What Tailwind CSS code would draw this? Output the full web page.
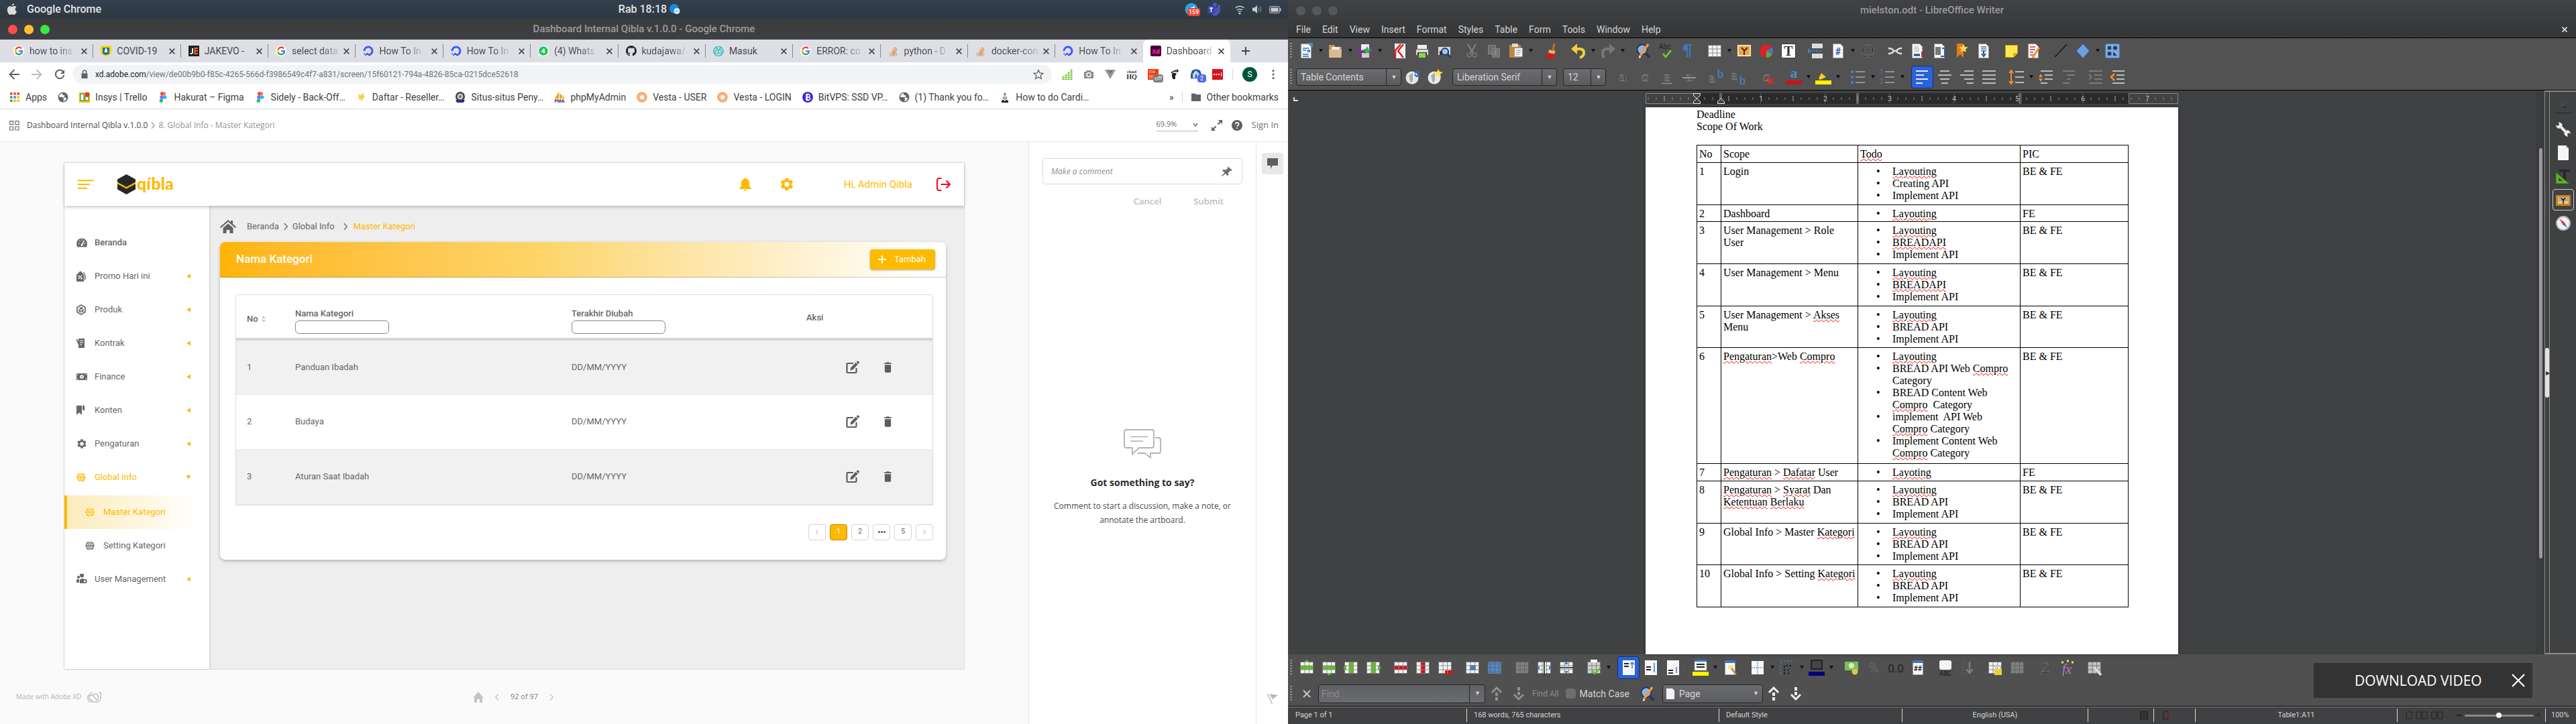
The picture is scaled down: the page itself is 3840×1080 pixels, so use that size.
<!DOCTYPE html>
<html lang="id">
<head>
<meta charset="utf-8">
<title>Dashboard Internal Qibla v.1.0.0</title>
<script src="https://cdn.jsdelivr.net/npm/@tailwindcss/browser@4"></script>
</head>
<body class="bg-[#404143]">
<svg class="hidden" aria-hidden="true">
  <symbol id="google" viewBox="0 0 16 16"><circle cx="8" cy="8" r="8" fill="#fff"/><g fill="none" stroke-width="2.4"><path d="M12 4.3A5 5 0 0 0 3.6 5.7" stroke="#ea4335"/><path d="M3.6 5.7a5 5 0 0 0 0 4.6" stroke="#fbbc05"/><path d="M3.6 10.3a5 5 0 0 0 8 1.6" stroke="#34a853"/><path d="M11.6 11.9A5 5 0 0 0 13 8.2H8.2" stroke="#4285f4"/></g></symbol>
  <symbol id="covid" viewBox="0 0 16 16"><path fill="#f5d90a" d="M0 0h16v11c0 3-4 3-8 5-4-2-8-2-8-5z"/><path fill="#1b6cb5" d="M3 3h10v8c0 2-3 2-5 3-2-1-5-1-5-3z"/><path fill="#fff" d="M7 4h2l2 8H5z"/><path fill="#2e7d32" d="M5 10h6v2H5z"/></symbol>
  <symbol id="jakevo" viewBox="0 0 16 16"><path fill="#222" d="M0 0h16v16H0z"/><path d="M6 4v6.500q0 1.500-3.500 1.500" stroke="#fff" stroke-width="2" fill="none"/><path d="M14 4H9.500v8H14M9.500 8H14" stroke="#f06423" stroke-width="2" fill="none"/></symbol>
  <symbol id="ocean" viewBox="0 0 16 16"><path d="M8 14a6 6 0 1 0-6-6" fill="none" stroke="#3d5afe" stroke-width="3"/><path fill="#3d5afe" d="M5 11h3v3H5zM3 13h2v2H3zM1.500 11H3v2H1.500z"/></symbol>
  <symbol id="whatsapp" viewBox="0 0 16 16"><path fill="#fff" d="M0 16l1.200-4A8 8 0 1 1 4 15z"/><circle cx="8" cy="8" r="6.800" fill="#1fc85a"/><path d="M9 4.500L6 9h4.500M9 5v6.500" stroke="#fff" stroke-width="1.400" fill="none"/></symbol>
  <symbol id="github" viewBox="0 0 16 16"><path fill="#24292e" d="M8 0C3.580 0 0 3.580 0 8c0 3.540 2.290 6.530 5.470 7.590.4.070.55-.17.55-.38v-1.490c-2.010.37-2.530-.49-2.690-.94-.36-.91-.9-1.200-.9-1.200-.7-.5.1-.5.100-.5.800.100 1.230.82 1.230.82.72 1.210 1.870.87 2.330.66.070-.52.280-.87.510-1.070-1.780-.2-3.640-.89-3.640-3.950 0-.87.310-1.590.82-2.150-.1-.2-.36-1 .1-2.100 0 0 .67-.2 2.200.8a7.600 7.600 0 0 1 4 0c1.530-1 2.200-.8 2.200-.8.4 1.100.2 1.900.1 2.100.5.560.82 1.270.82 2.150 0 3.070-1.870 3.750-3.650 3.950.290.25.54.730.54 1.480v2.200c0 .2.150.46.55.38A8 8 0 0 0 8 0z"/></symbol>
  <symbol id="masuk" viewBox="0 0 16 16"><circle cx="8" cy="8.500" r="7" fill="none" stroke="#35c0c5" stroke-width="1.600"/><path d="M3 2l5 5 5-5M8 7v4a3 3 0 0 1-5-2l3-3M8 11a3 3 0 0 0 5-2l-3-3" fill="none" stroke="#35c0c5" stroke-width="1.500"/></symbol>
  <symbol id="stack" viewBox="0 0 16 16"><path d="M2.500 10v5h10v-5" fill="none" stroke="#bcbbbb" stroke-width="1.400"/><path d="M4.500 13h6M4.700 10.600l6 .7M5.500 7.800l5.500 2M7.200 5l4.700 3.500M9.800 2.500l3.400 4.700" stroke="#f48024" stroke-width="1.400"/></symbol>
  <symbol id="xd" viewBox="0 0 16 16"><rect width="16" height="16" rx="2" fill="#470137"/><text x="8" y="11.500" font-family="Open Sans" font-size="9" font-weight="700" fill="#ff2bc2" text-anchor="middle">Xd</text></symbol>
  <symbol id="x" viewBox="0 0 10 10"><path d="M1.500 1.500l7 7M8.500 1.500l-7 7" stroke="currentColor" stroke-width="1.500"/></symbol>
  <symbol id="world" viewBox="0 0 16 16"><circle cx="8" cy="8" r="7.500" fill="#5f6368"/><path fill="#fff" d="M8 2c-2 1-1 3 1 3s2 2 0 3-3-1-4 0-3-1-3-1 1-5 6-5zM9 9c2-1 4 0 4 1s-2 4-4 4 1-2 0-3-1-2 0-2z"/></symbol>
  <symbol id="figma" viewBox="0 0 16 16"><path fill="#f24e1e" d="M8 0H6a2.700 2.700 0 0 0 0 5.300h2z"/><path fill="#ff7262" d="M8 0h2a2.700 2.700 0 0 1 0 5.300H8z"/><path fill="#a259ff" d="M8 5.300H6a2.700 2.700 0 0 0 0 5.400h2z"/><circle cx="10.700" cy="8" r="2.700" fill="#1abcfe"/><path fill="#0acf83" d="M8 10.700H6A2.700 2.700 0 1 0 8 13.300z"/></symbol>
  <symbol id="trello" viewBox="0 0 16 16"><path fill="#f4c20d" d="M0 1h16v15H0z"/><rect x="2" y="3" width="5" height="10" fill="#fff" stroke="#188038"/><rect x="9" y="7" width="5" height="6" fill="#fff" stroke="#188038"/><circle cx="12" cy="4" r="3.500" fill="#e53935"/></symbol>
  <symbol id="daftar" viewBox="0 0 16 16"><path fill="#f6cf4a" d="M3 3l4 2 4-4v5l3 2-4 1-1 6-3-5-3 2 1-4z"/></symbol>
  <symbol id="situs" viewBox="0 0 16 16"><circle cx="8" cy="7" r="7" fill="#2a3a8f"/><circle cx="8" cy="7" r="4.500" fill="#f2d54b"/><circle cx="8" cy="7" r="2" fill="#2a7bbf"/><path fill="#2d2a9a" d="M1 12h14l-2 4H3z"/></symbol>
  <symbol id="pma" viewBox="0 0 16 16"><path fill="#f89c0e" d="M7 0v10H1zM8 2c3 2 4 5 4 8H8zM12 4c2 2 3 4 3 6h-2z"/><text x="8" y="16" font-family="Open Sans" font-size="6.500" font-weight="800" fill="#4c4f8a" text-anchor="middle">PMA</text></symbol>
  <symbol id="vesta" viewBox="0 0 16 16"><circle cx="8" cy="8" r="6.500" fill="#fde3c8" stroke="#f5a55a" stroke-width="2.500"/><circle cx="8" cy="8" r="3.800" fill="#fff" stroke="#f3a965" stroke-width="1.500"/></symbol>
  <symbol id="bit" viewBox="0 0 16 16"><circle cx="8" cy="8" r="8" fill="#4527c8"/><path d="M6 4h3a2 2 0 0 1 0 4H6zM6 8h3.500a2 2 0 0 1 0 4H6zM7 2.500V13.500M9 2.500V4M9 12v1.500" fill="none" stroke="#fff" stroke-width="1.400"/></symbol>
  <symbol id="cardi" viewBox="0 0 16 16"><path fill="#222" d="M3 16v-3l3-1 2 2 2-2 3 1v3z"/><path d="M8 1v6M6 3h4M5 8h6l-1 3H6z" stroke="#777" fill="#ccc"/><circle cx="8" cy="4" r="1.200" fill="#c33"/></symbol>
  <symbol id="globe" viewBox="0 0 16 16"><circle cx="8" cy="8" r="7.500" fill="currentColor"/><path d="M.5 5.500h15M.5 10.500h15M8 .5v15" stroke="#fff"/><ellipse cx="8" cy="8" rx="3.600" ry="7.500" fill="none" stroke="#fff"/></symbol>
  <symbol id="gear" viewBox="0 0 24 24"><path fill="currentColor" fill-rule="evenodd" d="M19.400 13a7.500 7.500 0 0 0 0-2l2.200-1.700c.2-.2.300-.4.100-.7l-2-3.500c-.1-.2-.4-.3-.6-.2l-2.600 1a7.600 7.600 0 0 0-1.700-1L14.400 2.200c0-.2-.2-.4-.5-.4h-4c-.3 0-.5.2-.5.400L9 4.900c-.6.300-1.200.6-1.700 1l-2.600-1c-.2-.1-.5 0-.6.2l-2 3.500c-.1.300-.1.500.1.700L4.400 11a7.500 7.500 0 0 0 0 2l-2.200 1.700c-.2.200-.3.400-.1.700l2 3.500c.1.200.4.300.6.200l2.600-1c.5.400 1.100.7 1.700 1l.4 2.700c0 .2.200.4.500.4h4c.3 0 .5-.2.500-.4l.4-2.700c.6-.3 1.200-.6 1.700-1l2.600 1c.2.100.5 0 .6-.2l2-3.500c.2-.3.100-.5-.1-.7zM12 16a4 4 0 1 1 0-8 4 4 0 0 1 0 8z"/></symbol>
  <symbol id="edit" viewBox="0 0 20 20"><path d="M11 4H2.500a1 1 0 0 0-1 1v12a1 1 0 0 0 1 1h12a1 1 0 0 0 1-1v-6" fill="none" stroke="currentColor" stroke-width="2.200"/><path fill="currentColor" d="M6.500 14.500l.7-4 7.600-7.700 3 3-7.600 7.700zM15.600 2l1.300-1.300q.8-.7 1.600 0l1.300 1.300q.7.800 0 1.600L18.500 5z"/></symbol>
  <symbol id="trash" viewBox="0 0 14 18"><path fill="currentColor" d="M1 1.500h3.500l.8-1.300h3.400l.8 1.300H13V3.500H1zM1.800 4.800h10.400V16q0 1.600-1.500 1.600H3.300Q1.800 17.600 1.800 16z"/></symbol>
  <symbol id="left" viewBox="0 0 10 16"><path d="M8 1.500L2 8l6 6.500" fill="none" stroke="currentColor" stroke-width="1.800"/></symbol>
  <symbol id="right" viewBox="0 0 10 16"><path d="M2 1.500L8 8l-6 6.500" fill="none" stroke="currentColor" stroke-width="1.800"/></symbol>
</svg>

<div class="flex h-screen w-full overflow-hidden">

<!-- Browser window -->
<section class="flex w-1/2 flex-col bg-white font-[Roboto,sans-serif]">
  <div class="grid h-7 shrink-0 grid-cols-3 items-center bg-linear-to-b from-[#33404e] to-[#2e3841] px-[10px] text-base font-medium text-[#e4e6e8]">
    <div class="flex items-center gap-3.5">
      <svg class="h-[18px] w-4" viewBox="0 0 16 18" fill="#dcdcdc"><path d="M11 0c.1 2-1.500 3.800-3.200 3.700C7.600 2 9.300.2 11 0zM8 5c.7 0 1.900-1 3.400-.9 1.200 0 2.300.6 3 1.600-2.600 1.600-2.200 5.200.6 6.300-.8 2.200-2.300 5-3.900 5-1.200 0-1.600-.8-3-.8s-1.900.8-3 .8C3 17 .5 12.500.8 9 1 6 3 4.200 5 4.200 6.300 4.200 7.300 5 8 5z"/></svg>
      <span>Google Chrome</span>
    </div>
    <div class="flex items-center justify-center gap-1 pl-4">
      <span>Rab 18:18</span>
      <svg class="size-4" viewBox="0 0 16 16"><circle cx="7" cy="7" r="7" fill="#1e88e5"/><circle cx="11" cy="10.500" r="4.500" fill="#d6ebff"/><path d="M8.500 10.500h5" stroke="#3b6ea5" stroke-dasharray="1 1"/></svg>
    </div>
    <div class="flex items-center justify-end gap-2.5">
      <div class="relative mr-1 h-5 w-5">
        <svg class="size-5" viewBox="0 0 20 20"><circle cx="10" cy="10" r="9.500" fill="#2ca5e0"/><path fill="#fff" d="M4 10l11-5-2 10-4-3z"/></svg>
        <span class="absolute top-2 left-1 rounded-sm bg-[#f0413c] px-0.5 text-[9px] leading-3 text-white">159</span>
      </div>
      <svg class="mr-2.5 size-5" viewBox="0 0 20 20"><circle cx="11" cy="3" r="3" fill="#5059c9"/><circle cx="17" cy="5" r="2" fill="#5059c9"/><path fill="#4b53bc" d="M6 7h13v6a5 5 0 0 1-3 4 6 6 0 0 1-10 0z"/><path fill="#3b43a5" d="M0 5h11v11H0z"/><path d="M3 8h5M5.500 8v6" stroke="#fff" stroke-width="1.600"/></svg>
      <svg class="h-4 w-4" viewBox="0 0 16 16" fill="none" stroke="#c8ccd0" stroke-width="1.400"><path d="M1.500 6a9 9 0 0 1 13 0M4 9a6 6 0 0 1 8 0M6 11.500a3 3 0 0 1 4 0"/><circle cx="8" cy="14" r=".8"/></svg>
      <svg class="h-4 w-4" viewBox="0 0 16 16"><path fill="#c8ccd0" d="M1 5.500h3L8 2v12l-4-3.500H1z"/><path d="M10 5.500q2 2.500 0 5M12 3.500q3.500 4.500 0 9" stroke="#8d949b" fill="none"/></svg>
      <svg class="h-4 w-[18px]" viewBox="0 0 18 16"><rect x=".7" y="3.700" width="14.600" height="9.600" rx="1" fill="none" stroke="#c8ccd0"/><path fill="#c8ccd0" d="M2.500 5.500h11v6h-11zM16 6.500h1.500v4H16z"/></svg>
    </div>
  </div>

  <div class="relative flex h-[31px] shrink-0 items-center justify-center bg-linear-to-b from-[#3b3c3e] to-[#3e4043] text-[15px] font-medium text-[#9b9b9c]">
    <div class="absolute left-3 flex gap-2.5">
      <button aria-label="Tutup" class="size-3.5 rounded-full bg-[#fa4d51]"></button>
      <button aria-label="Kecilkan" class="size-3.5 rounded-full bg-[#fdbf35]"></button>
      <button aria-label="Besarkan" class="size-3.5 rounded-full bg-[#37e845]"></button>
    </div>
    Dashboard Internal Qibla v.1.0.0 - Google Chrome
  </div>

  <div id="tabs" class="relative flex h-[34px] shrink-0 bg-[#dddfe5] pr-[86px] pl-[9px] text-sm text-[#45484d]"></div>

  <div class="flex h-9 shrink-0 items-center text-[#5f6368]">
    <div class="flex w-[108px] shrink-0 items-center gap-4 pl-3">
      <button aria-label="Kembali"><svg class="size-[18px]" viewBox="0 0 18 18" fill="none" stroke="currentColor" stroke-width="1.900"><path d="M17 9H3M9.500 2L2.500 9l7 7"/></svg></button>
      <button aria-label="Maju" class="text-[#babcbe]"><svg class="size-[18px]" viewBox="0 0 18 18" fill="none" stroke="currentColor" stroke-width="1.900"><path d="M1 9h14M8.500 2l7 7-7 7"/></svg></button>
      <button aria-label="Muat ulang"><svg class="size-[18px]" viewBox="0 0 18 18"><path d="M14.500 5.500A6.300 6.300 0 1 0 15.300 10" fill="none" stroke="currentColor" stroke-width="2"/><path fill="currentColor" d="M16 2v6h-6z"/></svg></button>
    </div>
    <div class="flex h-7 flex-1 items-center rounded-full bg-[#f1f3f4] px-3">
      <svg class="h-3.5 w-3" viewBox="0 0 12 14"><path fill="#5f6368" d="M1.500 5.500h9V13h-9z"/><path d="M3.500 6V3.500a2.500 2.500 0 0 1 5 0V6" fill="none" stroke="#5f6368" stroke-width="1.500"/></svg>
      <p class="ml-2.5 flex-1 text-xs text-[#70757a]"><a href="#" class="text-[#202124]">xd.adobe.com</a>/view/de00b9b0-f85c-4265-566d-f3986549c4f7-a831/screen/15f60121-794a-4826-85ca-0215dce52618</p>
      <svg class="size-4" viewBox="0 0 16 16"><path d="M8 1.500l2 4.500 4.900.4-3.700 3.200 1.100 4.800L8 11.900l-4.300 2.500 1.100-4.800L1.100 6.400 6 6z" fill="none" stroke="#5f6368" stroke-width="1.300"/></svg>
    </div>
    <div class="flex shrink-0 items-center gap-4 pr-[14px] pl-[15px]">
      <svg class="size-4" viewBox="0 0 16 16"><path d="M2 16v-5M6 16V8M10 16V5M14 16V0" stroke="#6cc02c" stroke-width="3" stroke-dasharray="2 1"/></svg>
      <svg class="size-4" viewBox="0 0 16 16"><path fill="#8c8c8c" d="M1 4h3l1-2h6l1 2h3v10H1z"/><circle cx="8" cy="8.500" r="3" fill="none" stroke="#fff" stroke-width="1.500"/></svg>
      <svg class="size-4" viewBox="0 0 16 16"><path fill="#9a9a9a" d="M0 1h4l4 8 4-8h4L8 15z"/><path fill="#6f6f6f" d="M4 1h3l1 2 1-2h3L8 9z"/></svg>
      <svg class="size-4" viewBox="0 0 16 16" fill="#333" font-family="Liberation Serif" font-weight="700" text-anchor="middle"><text x="8" y="6" font-size="6">cloud</text><text x="8" y="15" font-size="10">HQ</text></svg>
      <div class="relative size-4 bg-[#ee4010]">
        <span class="absolute top-0 left-0.5 text-[8px] leading-2 text-[#ffd9c9]">co<br>RE</span>
        <span class="absolute top-2 left-2 rounded-sm bg-[#777] px-0.5 text-[9px] leading-3 text-white">off</span>
      </div>
      <svg class="size-4" viewBox="0 0 16 16" fill="#222"><path d="M5 6c4-1 7 0 5 3-1 1-2 1-1 3s-1 4-3 3-3-8-1-9z"/><circle cx="4" cy="5" r="1.200"/><circle cx="6.500" cy="3.500" r="1.300"/><circle cx="9" cy="2.800" r="1.400"/><ellipse cx="12" cy="2.800" rx="1.600" ry="2.200"/></svg>
      <div class="relative size-4">
        <svg class="size-4" viewBox="0 0 16 16"><path fill="#2b5797" d="M0 8l2-6 6-2 6 2 2 6v6H0z"/><path fill="#bcd7f2" d="M8 2l5 5v6H9V8H7v5H3V7z"/></svg>
        <span class="absolute top-2 left-2.5 rounded-sm bg-[#4a68ee] px-1 text-[9px] leading-3 text-white">2</span>
      </div>
      <svg class="size-4" viewBox="0 0 16 16"><path fill="#d9141e" d="M0 0h16v16H0z"/><path fill="#fff" d="M2 7h2v2H2zM5.500 7h2v2h-2zM9 7h2v2H9zM13 5h1v6h-1z"/></svg>
      <span class="-mx-0.5 h-4 w-px bg-[#d3d5d8]"></span>
      <button class="size-[22px] rounded-full bg-[#00543c] text-center text-xs text-white">S</button>
      <button aria-label="Menu"><svg class="h-4 w-4" viewBox="0 0 16 16" fill="#5f6368"><circle cx="8" cy="2.500" r="1.600"/><circle cx="8" cy="8" r="1.600"/><circle cx="8" cy="13.500" r="1.600"/></svg></button>
    </div>
  </div>

  <nav class="flex h-[34px] shrink-0 items-center justify-between border-b border-[#d6d8e0] pr-[14px] pb-0.5 pl-[14px] text-sm text-[#3e4145]">
    <div id="bookmarks" class="flex items-center gap-4"></div>
    <div class="flex items-center gap-3">
      <button>»</button>
      <span class="h-4 w-px bg-[#d0d2d5]"></span>
      <a href="#" class="flex items-center gap-2"><svg class="size-4" viewBox="0 0 16 16"><path fill="#5f6368" d="M1 2.500h5.500L8 4h7v10H1z"/></svg>Other bookmarks</a>
    </div>
  </nav>

  <header class="flex h-[49px] shrink-0 items-center justify-between border-b border-[#e6e6e6] px-[14px] font-['Open_Sans',sans-serif] text-xs text-[#4b4b4b]">
    <div class="flex items-center">
      <svg class="mr-[11px] size-[15px]" viewBox="0 0 15 15" fill="none" stroke="#6e6e6e" stroke-width="1.200"><path d="M.7.7h5v5h-5zM9 .7h5v5H9zM.7 9h5v5h-5zM9 9h5v5H9z"/></svg>
      <a href="#">Dashboard Internal Qibla v.1.0.0</a>
      <svg class="mx-1 h-3 w-2 text-[#999]"><use href="#right"/></svg>
      <span class="text-[#959595]">8. Global Info - Master Kategori</span>
    </div>
    <div class="flex items-center text-[#6e6e6e]">
      <label class="relative mr-5 flex items-center border-b border-[#b5b5b5] pb-0.5">
        <select aria-label="Zoom" class="w-[62px] appearance-none text-[11px] outline-none"><option>69.9%</option></select>
        <svg class="absolute right-0 size-2" viewBox="0 0 8 8"><path d="M1 2l3 4 3-4" fill="none" stroke="#6e6e6e" stroke-width="1.500"/></svg>
      </label>
      <button aria-label="Layar penuh" class="mr-[14px]"><svg class="size-4" viewBox="0 0 16 16"><path d="M9.500 6.500L13 3M3 13l3.500-3.500" stroke="#5e5e5e" stroke-width="2"/><path fill="#5e5e5e" d="M16 0v6l-6-6zM0 16v-6l6 6z"/></svg></button>
      <button aria-label="Bantuan" class="mr-[14px]"><svg class="size-4" viewBox="0 0 16 16"><circle cx="8" cy="8" r="8" fill="#5e5e5e"/><path d="M5.700 6.300q0-2.500 2.500-2.500t2.400 2.200q0 1.400-1.500 2.200-1 .5-1 1.600M8.100 11.300v1.700" fill="none" stroke="#fff" stroke-width="1.600"/></svg></button>
      <a href="#" class="text-[13px]">Sign In</a>
    </div>
  </header>

  <div class="flex min-h-0 flex-1">
    <main class="flex min-w-0 flex-1 flex-col bg-[#fafafa]">
      <!-- Artboard -->
      <div class="mt-[30px] mr-[95px] ml-[95px] flex min-h-0 flex-1 flex-col border border-[#dedede] bg-[#eeeeee] text-[13px] text-[#666767]">
        <header class="relative z-10 flex h-[64px] shrink-0 items-center justify-between bg-white pr-5 pl-5 shadow-[0_2px_5px_rgba(0,0,0,0.22)]">
          <div class="flex items-center">
            <button aria-label="Menu samping"><svg class="h-3.5 w-6" viewBox="0 0 24 14"><path d="M0 1.300h24M0 7h17.500M0 12.700h14" stroke="#ffb900" stroke-width="2"/></svg></button>
            <svg class="ml-[35px] h-[30px] w-[27px]" viewBox="0 0 27 30"><path fill="#272727" d="M13.500 0L27 7.500v15L13.500 30 0 22.500v-15z"/><path fill="#ffb900" d="M0 11.500l13.500 7.500L27 11.500v2.700L13.500 21.700 0 14.200z"/></svg>
            <span class="mb-1 ml-0.5 font-[Lato,sans-serif] text-[25px] leading-7 font-black text-[#ffb900]">qíbla</span>
          </div>
          <div class="flex items-center text-[#ffb900]">
            <button aria-label="Notifikasi" class="mr-[42px]"><svg class="h-5 w-[18px]" viewBox="0 0 18 20" fill="currentColor"><path d="M9 0q1.200 0 1.300 1.500C13.500 2.200 15 5 15 8v4.500l2.500 3.200V17H.5v-1.300L3 12.500V8c0-3 1.500-5.800 4.700-6.500C7.800 0 9 0 9 0zM7 18.300h4Q10.500 20 9 20t-2-1.700z"/></svg></button>
            <button aria-label="Pengaturan" class="mr-[74px]"><svg class="size-[22px]"><use href="#gear"/></svg></button>
            <span class="mr-9 text-[15px]">Hi, Admin Qibla</span>
            <button aria-label="Keluar" class="text-[#f5061c]"><svg class="h-5 w-[21px]" viewBox="0 0 21 20" fill="none" stroke="currentColor" stroke-width="2"><path d="M7.500 1H4Q1 1 1 4v12q0 3 3 3h3.500M6.500 10H20M14.500 4.500L20 10l-5.500 5.500"/></svg></button>
          </div>
        </header>
        <div class="flex min-h-0 flex-1">
          <nav class="w-[216px] shrink-0 bg-white pt-[30px] shadow-[1px_0_3px_rgba(0,0,0,0.15)]">
            <ul id="menu"></ul>
          </nav>
          <div class="min-w-0 flex-1 pr-[27px] pl-4">
            <div class="flex h-[54px] items-center pt-2">
              <svg class="h-5 w-6" viewBox="0 0 24 20" fill="#626262"><path d="M12 5.500l7.500 6.500v8h-5v-5h-5v5h-5v-8z"/><path d="M12 0l4 3.500V1h3v5l5 4.500-1.200 1.700L12 2.700 1.200 12.200 0 10.500z"/></svg>
              <a href="#" class="ml-4">Beranda</a>
              <svg class="mx-1.5 h-3 w-2"><use href="#right"/></svg>
              <a href="#">Global Info</a>
              <svg class="mr-2 ml-3 h-3 w-2"><use href="#right"/></svg>
              <span class="text-[#ffb900]">Master Kategori</span>
            </div>
            <section class="rounded-lg bg-white pb-[29px] shadow-[0_2px_5px_rgba(0,0,0,0.25)]">
              <div class="flex h-[53px] items-center justify-between rounded-t-lg border-b border-black/20 bg-linear-to-r from-[#ffb400] via-[#fdd56a] via-45% to-white to-98% pr-4 pl-6">
                <h1 class="text-[17px] font-medium text-white">Nama Kategori</h1>
                <button class="flex h-[30px] items-center gap-3 rounded-sm bg-[#fdbb00] pr-3.5 pl-3 text-[13px] text-white shadow-[0_1px_3px_rgba(0,0,0,0.35)]"><svg class="size-3" viewBox="0 0 12 12"><path d="M6 0v12M0 6h12" stroke="#fff" stroke-width="2"/></svg>Tambah</button>
              </div>
              <div class="mt-[25px] mr-[19px] ml-[23px] rounded-t border border-[#dcdcdc]">
                <table class="w-full table-fixed text-left">
                  <thead class="border-b-4 border-[#d6d6d6]">
                    <tr class="h-[66px]">
                      <th class="w-[88px] pt-2 pl-4 font-medium">No <svg class="mb-px ml-0.5 inline h-2.5 w-1.5" viewBox="0 0 6 10" fill="#c5c9cf"><path d="M0 4l3-4 3 4zM0 6l3 4 3-4z"/></svg></th>
                      <th class="w-[412px] pt-3 align-middle font-medium"><label class="block leading-5">Nama Kategori<input class="block h-5 w-[140px] rounded-md border border-[#8a8a8a] bg-white px-2"></label></th>
                      <th class="w-[350px] pt-3 font-medium"><label class="block leading-5">Terakhir Diubah<input class="block h-5 w-[140px] rounded-md border border-[#8a8a8a] bg-white px-2"></label></th>
                      <th class="pt-1 font-medium">Aksi</th>
                    </tr>
                  </thead>
                  <tbody id="rows"></tbody>
                </table>
              </div>
              <div class="mt-7 mr-[19px] flex justify-end gap-1.5 text-[11px]">
                <button aria-label="Sebelumnya" class="flex h-6 w-[26px] items-center justify-center rounded-sm border border-[#d5d5d5] text-[#999]"><svg class="h-2 w-1.5"><use href="#left"/></svg></button>
                <button class="h-6 w-[26px] rounded-sm border border-[#b98a00] bg-[#ffb900] text-white">1</button>
                <button class="h-6 w-[26px] rounded-sm border border-[#d5d5d5]">2</button>
                <button aria-label="Lainnya" class="flex h-6 w-[26px] items-center justify-center gap-px rounded-sm border border-[#d5d5d5]"><i class="size-[3px] rounded-full bg-[#555]"></i><i class="size-[3px] rounded-full bg-[#555]"></i><i class="size-[3px] rounded-full bg-[#555]"></i></button>
                <button class="h-6 w-[26px] rounded-sm border border-[#d5d5d5]">5</button>
                <button aria-label="Berikutnya" class="flex h-6 w-[26px] items-center justify-center rounded-sm border border-[#d5d5d5] text-[#999]"><svg class="h-2 w-1.5"><use href="#right"/></svg></button>
              </div>
            </section>
          </div>
        </div>
      </div>
      <footer class="grid h-[81px] shrink-0 grid-cols-3 items-center font-['Open_Sans',sans-serif] text-[#7c7c7c]">
        <div class="flex items-center gap-2 pl-6 text-[10px] text-[#b4b4b4]">Made with Adobe XD
          <svg class="h-4 w-[22px]" viewBox="0 0 22 16" fill="none" stroke="#b4b4b4" stroke-width="1.300"><path d="M7 15.200A6 6 0 0 1 6 3.500 7.300 7.300 0 0 1 21.300 8a7 7 0 0 1-7 7.200z"/><path d="M9.500 12.500H7.500a3.800 3.800 0 1 1 3-6.200l4 5M9 5.500a4.700 4.700 0 1 1 5 7"/></svg>
        </div>
        <div class="flex items-center justify-center text-[#c4c4c4]">
          <svg class="h-4 w-4" viewBox="0 0 16 16" fill="currentColor"><path d="M8 0l8 9h-2v7h-4v-5H6v5H2V9H0z"/></svg>
          <button aria-label="Artboard sebelumnya" class="ml-3.5"><svg class="h-3 w-3"><use href="#left"/></svg></button>
          <span class="mx-3.5 text-[11px] text-[#7c7c7c]">92 of 97</span>
          <button aria-label="Artboard berikutnya"><svg class="h-3 w-3"><use href="#right"/></svg></button>
        </div>
      </footer>
    </main>

    <aside class="flex w-[339px] shrink-0 flex-col border-l border-[#e4e4e4] px-5 pt-6 font-['Open_Sans',sans-serif]">
      <div class="flex h-[39px] items-center rounded-sm border border-[#dadada] pr-3.5 pl-3">
        <input aria-label="Komentar" placeholder="Make a comment" class="min-w-0 flex-1 text-xs italic outline-none placeholder:text-[#8f8f8f]">
        <svg class="h-4 w-4" viewBox="0 0 16 16" fill="#6e6e6e"><path d="M9 0l7 6-1.500 1L13 6.500l-3 3 .3 3.500L9 14.500 5.800 11 1 15l-1-.5 4.500-5L1 6.500 2.500 5l3.800.5 3-2.700z"/></svg>
      </div>
      <div class="mt-4 flex justify-end gap-12 pr-7 text-[13px] font-semibold text-[#bdbdbd]">
        <button>Cancel</button><button>Submit</button>
      </div>
      <div class="flex flex-1 flex-col items-center justify-center pt-9">
        <svg class="h-11 w-14" viewBox="0 0 56 44" fill="none" stroke="#b3b3b3" stroke-width="1.800"><path d="M4 1h38q3 0 3 3v21q0 3-3 3H23l-10 9.500V28H4q-3 0-3-3V4q0-3 3-3z"/><path d="M47 13h5q3 0 3 3v17q0 3-3 3H40v7l-8-7H21"/><path d="M10 11.500h26M10 18h19" stroke-width="1.300"/></svg>
        <h2 class="mt-[26px] text-sm leading-5 font-bold text-[#2c2c2c]">Got something to say?</h2>
        <p class="mt-3.5 text-center text-xs leading-[21px] text-[#4b4b4b]">Comment to start a discussion, make a note, or<br>annotate the artboard.</p>
      </div>
    </aside>
    <aside class="flex w-12 shrink-0 flex-col items-center justify-between border-l border-[#e4e4e4] pt-4 pb-[29px]">
      <button aria-label="Komentar" class="flex h-8 w-8 items-center justify-center rounded-sm bg-[#e8e8e8]"><svg class="h-4 w-4" viewBox="0 0 16 16"><path fill="#5e5e5e" d="M0 0h16v11H8l-3 5v-5H0z"/></svg></button>
      <button aria-label="Laporkan"><svg class="h-4 w-4" viewBox="0 0 16 16"><path d="M.5 0l7 15" stroke="#b8b8b8" stroke-width="1.500"/><path fill="#b8b8b8" d="M3 0l13 2-8 6z"/></svg></button>
    </aside>
  </div>
</section>

<!-- Word processor window -->
<section class="relative flex w-1/2 flex-col bg-[#404143] font-[Roboto,sans-serif] text-sm text-[#d4d4d4]">
  <div class="shrink-0 border-b border-black bg-linear-to-b from-[#404245] to-[#353637]">
    <div class="relative flex h-8 items-center justify-center text-[15px] font-medium text-[#9b9b9c]">
      <div class="absolute left-3 flex gap-2.5">
        <button aria-label="Close" class="size-3.5 rounded-full bg-[#55575a]"></button>
        <button aria-label="Minimize" class="size-3.5 rounded-full bg-[#55575a]"></button>
        <button aria-label="Maximize" class="size-3.5 rounded-full bg-[#55575a]"></button>
      </div>
      mielston.odt - LibreOffice Writer
    </div>
    <nav class="flex h-6 items-center gap-[17px] pl-3">
      <button>File</button><button>Edit</button><button>View</button><button>Insert</button><button>Format</button><button>Styles</button><button>Table</button><button>Form</button><button>Tools</button><button>Window</button><button>Help</button>
      <button aria-label="Close document" class="ml-auto pr-3"><svg class="size-2.5 text-white"><use href="#x"/></svg></button>
    </nav>
  </div>
  <div class="shrink-0 border-b border-black bg-[#525252]">
    <div class="flex h-[39px] items-center pb-0.5 pl-[3px]"><i class="mr-1 h-6 w-[3px] bg-[repeating-linear-gradient(#8a8a8a_0_2px,#525252_2px_4px)]"></i>
      <div class="flex items-center" data-bar="new ^ open ^ save ^ | pdf print preview | cut copy paste ^ | brush | undo ^ redo ^ | find abc pilcrow | table ^ image chart textbox | break field ^ omega | link footnote endnote bookmark xref | note track | line diamond ^ shapes"></div>
    </div>
    <div class="flex h-[38px] items-center pl-[3px]"><i class="mr-1.5 h-6 w-[3px] bg-[repeating-linear-gradient(#8a8a8a_0_2px,#525252_2px_4px)]"></i>
      <div class="relative flex w-[157px]"><select aria-label="Paragraph style" class="h-[26px] w-full appearance-none rounded border border-[#262626] bg-linear-to-b from-[#6a6c6f] to-[#5b5c5f] pl-1.5"><option>Table Contents</option></select><span class="pointer-events-none absolute right-0 flex h-[26px] w-[23px] items-center justify-center border-l border-[#262626] text-[9px]">▼</span></div>
      <div class="flex items-center" data-bar="styleup stylenew"></div>
      <div class="relative ml-2.5 flex w-[156px]"><select aria-label="Font name" class="h-[26px] w-full appearance-none rounded border border-[#262626] bg-linear-to-b from-[#6a6c6f] to-[#5b5c5f] pl-1.5"><option>Liberation Serif</option></select><span class="pointer-events-none absolute right-0 flex h-[26px] w-[23px] items-center justify-center border-l border-[#262626] text-[9px]">▼</span></div>
      <div class="relative mr-2 ml-[9px] flex w-16"><select aria-label="Font size" class="h-[26px] w-full appearance-none rounded border border-[#262626] bg-linear-to-b from-[#6a6c6f] to-[#5b5c5f] pl-1.5"><option>12</option></select><span class="pointer-events-none absolute right-0 flex h-[26px] w-[23px] items-center justify-center border-l border-[#262626] text-[9px]">▼</span></div>
      <div class="flex items-center" data-bar="bold italic underline strike | super sub | clear | color ^ highlight ^ | bullets ^ numbers ^ | *aleft acenter aright ajust | spacing ^ pinc pdec | indent dedent"></div>
    </div>
  </div>

  <div class="flex min-h-0 flex-1">
    <div class="relative flex min-w-0 flex-1 flex-col items-center pt-1">
      <i class="absolute top-2.5 left-2 h-1.5 w-[7px] border-b-2 border-l-2 border-[#ddd]"></i>
      <svg class="h-4 w-[794px] shrink-0" viewBox="0 0 794 16">
        <defs><pattern id="ticks" x="76" width="96" height="16" patternUnits="userSpaceOnUse"><path d="M12 6v4M24 6v4M36 6v4M60 6v4M72 6v4M84 6v4" stroke="#8a8a8a"/><path d="M48 4v8M96 1v2M96 13v2" stroke="#aaa"/></pattern></defs>
        <path fill="#2b2b2b" d="M76 0h644v16H76z"/><path d="M.5.5H76v15H.5zM720.500.5h73v15h-73z" fill="none" stroke="#888"/>
        <path fill="url(#ticks)" d="M2 1h790v14H2z"/>
        <g fill="#ccc" font-family="Roboto" font-size="10" text-anchor="middle"><text x="172" y="12">1</text><text x="268" y="12">2</text><text x="364" y="12">3</text><text x="460" y="12">4</text><text x="554" y="12">5</text><text x="652" y="12">6</text><text x="748" y="12">7</text></g>
        <path d="M111 0v16M113 0v16M315 0v16M317 0v16M557.500 0v16M559.500 0v16" stroke="#999"/>
        <path d="M71.500.5h10v3l-5 4.500-5-4.500zM76.500 8l5 4.500v3h-10v-3zM112.500 8l5 4.500v3h-10v-3z" fill="#404143" stroke="#eee"/>
      </svg>
      <article class="mt-[5px] w-[794px] flex-1 overflow-hidden bg-white pt-0.5 pr-[74px] pl-[76px] font-['Liberation_Serif',serif] text-base leading-[18px] text-black shadow-[0_0_4px_rgba(0,0,0,0.5)]">
        <p>Deadline</p>
        <p class="mb-[18px]">Scope Of Work</p>
        <table class="w-full table-fixed border-collapse text-left align-top">
          <thead><tr class="h-[26px]">
            <th class="w-9 border border-black px-[3px] font-normal">No</th>
            <th class="w-[204px] border border-black px-[3px] font-normal">Scope</th>
            <th class="w-[242px] border border-black px-[3px] font-normal"><span class="underline decoration-[#f00] decoration-wavy decoration-1">Todo</span></th>
            <th class="border border-black px-[3px] font-normal">PIC</th>
          </tr></thead>
          <tbody id="scope"></tbody>
        </table>
      </article>
    </div>
    <div class="relative w-[13px] shrink-0 bg-[#3b3c3d]"><i class="absolute top-[86px] left-[5px] h-[612px] w-[5px] rounded-full bg-[#9b9b9b]"></i></div>
    <aside class="relative flex w-[47px] shrink-0 flex-col items-center gap-2 border-y-2 border-l border-[#8c8c8c] pt-2 pl-[7px]">
      <i class="absolute inset-y-0 left-[6px] w-px bg-[#8c8c8c]"></i>
      <i class="absolute top-[382px] left-0 h-[74px] w-[6px] rounded-sm bg-[#e2e2e2]"></i>
      <i class="absolute top-[414px] left-px text-[8px] leading-3 text-[#333] not-italic">▶</i>
      <div class="flex h-6 w-6 items-center justify-center border-b border-[#222]"><svg class="size-3.5" viewBox="0 0 14 14"><path d="M3 4h6M3 7h6" stroke="#3c4f7d"/><path fill="#1f2937" d="M6 9h6l-3 3z"/></svg></div>
      <div class="flex flex-col items-center gap-[3px]" data-side="wrench doc styles *gallery compass"></div>
    </aside>
  </div>

  <div class="h-[77px] shrink-0 bg-[#505050]">
    <div class="flex h-10 items-center pl-[3px]"><i class="mr-[5px] h-6 w-[3px] bg-[repeating-linear-gradient(#8a8a8a_0_2px,#525252_2px_4px)]"></i>
      <div class="flex items-center" data-bar="rowup rowdown colleft colright | delrow delcol deltab | selcell seltab | merge split splitv | optimize ^ | *vtop vcenter vbottom | tcolor ^ autof | borders ^ bstyle ^ bcolor ^ | currency percent decimal numfmt | caption sort | protect unprotect | sum fx | props"></div>
    </div>
    <div class="flex h-[37px] items-center pl-[3px]"><i class="mr-[15px] h-6 w-[3px] bg-[repeating-linear-gradient(#8a8a8a_0_2px,#525252_2px_4px)]"></i>
      <button aria-label="Close find bar"><svg class="size-3.5 text-[#c4c4c4]"><use href="#x"/></svg></button>
      <div class="relative ml-2.5 flex w-[249px]"><input aria-label="Find" placeholder="Find" class="h-7 w-full rounded border border-[#262626] bg-linear-to-b from-[#5f6164] to-[#6a6b6e] pl-1 placeholder:text-[#8a8a8a]"><span class="absolute right-0 flex h-7 w-6 items-center justify-center border-l border-[#262626] text-[9px]">▼</span></div>
      <div class="flex items-center opacity-40" data-bar="up down"></div>
      <button class="ml-1 text-xs text-[#8c8c8c]">Find All</button>
      <label class="ml-2.5 flex items-center gap-1.5"><input type="checkbox" class="size-[15px] appearance-none rounded bg-[#6d6e70]">Match Case</label>
      <div class="ml-2.5 flex items-center" data-bar="find"></div>
      <div class="relative ml-1.5 flex w-[150px] items-center"><svg class="absolute left-1.5 h-4 w-3" viewBox="0 0 12 16"><path fill="#f2f2f2" d="M0 0h9l3 3v13H0z"/></svg><select aria-label="Navigate by" class="h-7 w-full appearance-none rounded border border-[#262626] bg-linear-to-b from-[#6a6c6f] to-[#5b5c5f] pl-6"><option>Page</option></select><span class="pointer-events-none absolute right-1.5 text-[9px]">▼</span></div>
      <div class="flex items-center" data-bar="up down"></div>
    </div>
  </div>
  <footer class="grid h-[27px] shrink-0 grid-cols-[267fr_376fr_273fr_277fr_98fr_62fr_301fr_221fr_45fr] items-center border-t border-black bg-[#404143] text-[11px] shadow-[inset_0_1px_0_#8e8e8e]">
    <span class="min-w-0 border-r border-[#ddd] pl-[11px] leading-5">Page 1 of 1</span>
    <span class="min-w-0 border-r border-[#ddd] pl-2.5 leading-5">168 words, 765 characters</span>
    <span class="min-w-0 border-r border-[#ddd] pl-2.5 leading-5">Default Style</span>
    <span class="min-w-0 border-r border-[#ddd] text-center leading-5">English (USA)</span>
    <span class="flex h-5 min-w-0 items-center justify-end border-r border-[#ddd] pr-2"><i class="h-3 w-3 border border-[#222] bg-[#333]"></i></span>
    <span class="flex h-5 min-w-0 items-center border-r border-[#ddd] pl-3"><svg class="size-3.5" viewBox="0 0 14 14"><path d="M2 1h7v12H2z" fill="none" stroke="#222"/><circle cx="10" cy="7" r="2.500" fill="#8d2020"/></svg></span>
    <span class="min-w-0 border-r border-[#ddd] text-center leading-5">Table1:A11</span>
    <span class="flex h-5 min-w-0 items-center gap-1 border-r border-[#ddd] pr-[7px] pl-3">
      <svg class="h-3 w-14 shrink-0" viewBox="0 0 56 12" fill="none" stroke="#222"><path d="M1 1h8v10H1zM16 1h7v10h-7zM25 1h7v10h-7zM39 1h7v10h-7zM48 1h7v10h-7z"/></svg>
      <button aria-label="Zoom out" class="ml-4 h-0.5 w-2 bg-[#222]"></button>
      <input type="range" aria-label="Zoom" value="50" class="h-[3px] min-w-0 flex-1 appearance-none rounded bg-[#8a8a8a] [&::-webkit-slider-thumb]:size-2 [&::-webkit-slider-thumb]:appearance-none [&::-webkit-slider-thumb]:rounded-full [&::-webkit-slider-thumb]:bg-white">
      <button aria-label="Zoom in" class="leading-3 text-[#222]">+</button>
    </span>
    <span class="min-w-0 pl-2 leading-5">100%</span>
  </footer>
  <div class="absolute right-[65px] bottom-[39px] flex h-[52px] w-[326px] items-center justify-between bg-[#333333] pr-[10px] pl-[61px] font-['Open_Sans',sans-serif] text-[21px] text-white">
    <button>DOWNLOAD VIDEO</button>
    <button aria-label="Dismiss"><svg class="size-[22px]" viewBox="0 0 22 22"><path d="M2 2l18 18M20 2L2 20" stroke="#fff" stroke-width="2.200"/></svg></button>
  </div>
</section>
</div>

<script>
const put = (id, html) => { document.getElementById(id).innerHTML = html; };

// Browser tabs
const tabs = [['google','how to ins'],['covid','COVID-19'],['jakevo','JAKEVO -'],['google','select data'],['ocean','How To In'],['ocean','How To In'],['whatsapp','(4) Whats'],['github','kudajawa/'],['masuk','Masuk'],['google','ERROR: co'],['stack','python - D'],['stack','docker-con'],['ocean','How To In'],['xd','Dashboard']];
put('tabs', tabs.map(([icon, name], i) => {
  const on = i === tabs.length - 1;
  const whole = name === 'COVID-19' || name === 'JAKEVO -' || name === 'Masuk';
  return `<div class="relative flex min-w-0 flex-1 items-center pr-2 pl-[11px] ${on ? 'rounded-t-lg bg-white' : ''}">
    <svg class="size-4 shrink-0"><use href="#${icon}"/></svg>
    <span class="ml-2 min-w-0 flex-1 whitespace-nowrap"><span class="${whole ? '' : on ? 'bg-linear-to-r from-[#45484d] from-75% to-[#c9c9c9] bg-clip-text text-transparent' : 'bg-linear-to-r from-[#45484d] from-65% to-[#c3c5cb] bg-clip-text text-transparent'}">${name}</span></span>
    <button aria-label="Tutup tab" class="ml-1 shrink-0"><svg class="size-[11px]"><use href="#x"/></svg></button>
    ${on || i === tabs.length - 2 ? '' : '<i class="absolute right-0 h-5 w-px bg-[#85888d]"></i>'}</div>`;
}).join('') + '<button aria-label="Tab baru" class="absolute right-14 h-full"><svg class="size-3.5" viewBox="0 0 14 14"><path d="M7 1v12M1 7h12" stroke="#3c4043" stroke-width="1.800"/></svg></button>');

// Bookmarks
const marks = [['world',''],['trello','Insys | Trello'],['figma','Hakurat – Figma'],['figma','Sidely - Back-Off…'],['daftar','Daftar - Reseller…'],['situs','Situs-situs Peny…'],['pma','phpMyAdmin'],['vesta','Vesta - USER'],['vesta','Vesta - LOGIN'],['bit','BitVPS: SSD VP…'],['world','(1) Thank you fo…'],['cardi','How to do Cardi…']];
put('bookmarks', '<a href="#" class="flex items-center gap-2"><svg class="size-4" viewBox="0 0 16 16"><path fill="#ea4335" d="M1 1h3.500v3.500H1zM6.300 1h3.500v3.500H6.300zM11.500 1H15v3.500h-3.500z"/><path fill="#34a853" d="M1 6.300h3.500v3.500H1zM1 11.500h3.500V15H1z"/><path fill="#4285f4" d="M6.300 6.300h3.500v3.500H6.300z"/><path fill="#fbbc05" d="M11.500 6.300H15v3.500h-3.500zM6.300 11.500h3.500V15H6.300zM11.500 11.500H15V15h-3.500z"/></svg>Apps</a>' +
  marks.map(([icon, name]) => name
    ? `<a href="#" class="flex items-center gap-2"><svg class="size-4"><use href="#${icon}"/></svg>${name}</a>`
    : `<a href="#" aria-label="Situs" class="flex"><svg class="size-4"><use href="#${icon}"/></svg></a>`).join(''));

// Dashboard side menu
const mi = {
  gauge: '<path fill="currentColor" d="M0 9.500a8 8 0 0 1 16 0c0 2-.6 3.500-1.500 5h-13C.6 13 0 11.500 0 9.500z"/><path d="M3 9.500h1.500M4.300 5l1 1M8 3v1.500M13 9.500h-1.500M11.500 5L8 11" stroke="#fff" stroke-width="1.500"/><circle cx="8" cy="11.500" r="1.600" fill="#fff"/>',
  promo: '<path fill="currentColor" d="M0 6l5-5q1-1 2 0l4 5v10H1q-1 0-1-1zM9 1q4 2 4.500 6v6l-1.500 1V6z"/><path d="M3 12l5-5" stroke="#fff" stroke-width="1.200"/><circle cx="3.500" cy="8" r="1.200" fill="#fff"/><circle cx="7.500" cy="11.500" r="1.200" fill="#fff"/>',
  box: '<path d="M7 1l6 3.500v7L7 15l-6-3.500v-7z" fill="none" stroke="currentColor" stroke-width="1.700"/><path fill="currentColor" d="M7 4l3.500 2L7 8 3.500 6zM3.300 7l3.200 2v3.500l-3.200-2zM10.700 7L7.500 9v3.500l3.200-2z"/>',
  doc: '<path fill="currentColor" d="M3 1h9v14H3z"/><path d="M5 4h5M5 7h5M5 10h3" stroke="#fff"/><path d="M0 2l4 8" stroke="currentColor" stroke-width="2"/>',
  cash: '<path fill="currentColor" d="M0 3h16v10H0z"/><circle cx="8" cy="8" r="2.800" fill="#fff"/><circle cx="8" cy="8" r=".9" fill="currentColor"/><path fill="#fff" d="M1 4h2L1 6zM15 4h-2l2 2zM1 12h2l-2-2zM15 12h-2l2-2z"/>',
  mark: '<path fill="currentColor" d="M0 1h8v14l-4-3.500L0 15zM9 1h3v8l-3-2z"/>',
  users: '<path fill="currentColor" d="M5 1.500a3 3 0 1 1 6 1 3 3 0 0 1-6 0zM1 5a2 2 0 1 1 3.500 1.200A2 2 0 0 1 1 5zM0 13V9q2-3 4 0v4zM5 14V9q1-2 4-2 2 0 2 1l-1 6z"/><circle cx="12.500" cy="11" r="2.400" fill="none" stroke="currentColor" stroke-width="1.800"/>'
};
const ic = k => k === 'globe' ? '<svg class="size-3.5 shrink-0"><use href="#globe"/></svg>' : k === 'gear' ? '<svg class="size-4 shrink-0"><use href="#gear"/></svg>' : `<svg class="size-4 shrink-0" viewBox="0 0 16 16">${mi[k]}</svg>`;
const menu = [['gauge','Beranda',''],['promo','Promo Hari ini','l'],['box','Produk','l'],['doc','Kontrak','l'],['cash','Finance','l'],['mark','Konten','l'],['gear','Pengaturan','l'],['globe','Global Info','d'],['globe','Master Kategori','on'],['globe','Setting Kategori','sub'],['users','User Management','l']];
put('menu', menu.map(([icon, name, k]) => `<li><a href="#" class="flex h-[50px] items-center ${k === 'on' ? 'mt-0.5 border-l-4 border-[#ffb900] bg-linear-to-r from-[#fbecba] to-white to-95% pl-[27px] text-[#ffb900]' : k === 'sub' ? 'pl-[31px]' : k === 'd' ? 'pl-[18px] text-[#ffb900]' : 'pl-[18px]'} ${name === 'Beranda' ? 'font-medium' : ''}">
  <span class="flex w-[27px] shrink-0">${ic(icon)}</span><span class="flex-1">${name}</span>
  ${k === 'l' ? '<svg class="mr-[27px] size-2" viewBox="0 0 8 8"><path fill="#ffb900" d="M7 .5v7L1 4z"/></svg>' : k === 'd' ? '<svg class="mr-[27px] size-2" viewBox="0 0 8 8"><path fill="#ffb900" d="M.5 1h7L4 7z"/></svg>' : ''}</a></li>`).join(''));

put('rows', ['Panduan Ibadah','Budaya','Aturan Saat Ibadah'].map((n, i) => `<tr class="h-[82px] border-b border-[#e6e6e6] ${i % 2 ? 'bg-white' : 'bg-[#f1f1f1]'}">
  <td class="pl-4">${i + 1}</td><td>${n}</td><td>DD/MM/YYYY</td>
  <td><div class="flex items-center gap-9 pl-[59px] text-[#5c5d5d]"><button aria-label="Ubah ${n}"><svg class="size-5"><use href="#edit"/></svg></button><button aria-label="Hapus ${n}"><svg class="h-4 w-[13px]"><use href="#trash"/></svg></button></div></td></tr>`).join(''));

// Scope table; a leading tilde marks a word unknown to the spell checker
const words = s => s.replace(/~(\w+)/g, '<span class="underline decoration-[#f00] decoration-wavy decoration-1">$1</span>');
const three = ['~Layouting','BREAD API','Implement API'];
const scope = [
  ['Login',['~Layouting','Creating API','Implement API'],'BE & FE',63],
  ['Dashboard',['~Layouting'],'FE',25],
  ['User Management > Role User',['~Layouting','~BREADAPI','Implement API'],'BE & FE',63],
  ['User Management > Menu',['~Layouting','~BREADAPI','Implement API'],'BE & FE',63],
  ['User Management > ~Akses Menu',three,'BE & FE',62],
  ['~Pengaturan>Web ~Compro',['~Layouting','BREAD API Web ~Compro Category','BREAD Content Web ~Compro&nbsp; Category','implement&nbsp; API Web<br>~Compro Category','Implement Content Web ~Compro Category'],'BE & FE',173],
  ['~Pengaturan > ~Dafatar User',['~Layoting'],'FE',26],
  ['~Pengaturan > ~Syarat Dan ~Ketentuan ~Berlaku',three,'BE & FE',63],
  ['Global Info > Master ~Kategori',three,'BE & FE',62],
  ['Global Info > Setting ~Kategori',three,'BE & FE',63]
];
put('scope', scope.map(([s, todo, pic, h], i) => `<tr class="align-top" style="height:${h}px">
  <td class="border border-black px-[3px] pt-1">${i + 1}</td><td class="border border-black px-[3px] pt-1">${words(s)}</td>
  <td class="border border-black px-[3px] pt-1"><ul class="list-none pl-12">${todo.map(t => `<li class="relative"><span class="absolute -left-6">•</span>${words(t)}</li>`).join('')}</ul></td>
  <td class="border border-black px-[3px] pt-1">${pic}</td></tr>`).join(''));

// Toolbar glyphs, drawn on a 24 x 24 grid
const grid = extra => '<path fill="#f4f4f4" stroke="#777" d="M2.500 3.500h19v17h-19z"/>' + extra + '<path d="M2.500 9h19M2.500 15h19M9 3.500v17M15.500 3.500v17" stroke="#8d8d8d"/>';
const page = extra => '<path fill="#f7f7f7" stroke="#999" d="M4.500 1.500h11l4 4v17h-15z"/>' + extra;
const lines = (xs, c = '#b9bdb4') => `<path d="${xs}" stroke="${c}" stroke-width="2"/>`;
const letter = (t, extra = '', st = '', c = '#444', s = '#909090') => `<text x="12" y="18" font-family="Liberation Serif" font-size="22" ${st} fill="${c}" stroke="${s}" stroke-width=".6" text-anchor="middle">${t}</text>${extra}`;
const I = {
  new: page('<path d="M7 8h9M7 11h5M7 17h9M7 20h9" stroke="#2673b8" stroke-width="1.500"/><path fill="#3f8fd0" d="M14 10h4v4h-4zM13 0h9v7z"/>'),
  open: '<path fill="#b89765" d="M2 3h8l2 3h9v16H2z"/><path fill="#eee" d="M6 6h12v8H6z"/><path fill="#d9bb8c" d="M2 10h19l-1 12H3z"/>',
  save: '<path fill="#6f3a80" d="M2 2h20v20H2z"/><path fill="#f0eef2" d="M6 2h12v9H6z"/><path fill="#cfcfcf" d="M7 15h11v7H7z"/><path fill="#35b34a" d="M15 5l2 4 5 .5-4 3 1 4.500-4-2.500-4 2.500 1-4.500-4-3 5-.5z"/>',
  pdf: '<path fill="#f5f5f5" d="M4 1h16v22H4z"/><path d="M17 2L9 12l8 10M13 2L5 11v12" stroke="#d8232a" stroke-width="2.500" fill="none"/>',
  print: '<path fill="#efefef" d="M5 3h14v8H5z"/><path fill="#d9d9d9" stroke="#555" d="M2.500 9.500h19v9h-19z"/><path fill="#333" d="M5 14h14v4H5z"/><path fill="#8bd448" d="M7 15h10v7H7z"/>',
  preview: '<path fill="#d9d9d9" stroke="#555" d="M2.500 5.500h19v13h-19z"/><path fill="#333" d="M5 12h14v6H5z"/><circle cx="13" cy="13" r="5" fill="#9cc4ef" stroke="#1d3e79" stroke-width="2"/><path d="M17 17l5 5" stroke="#1d3e79" stroke-width="3"/>',
  cut: '<path d="M6 2l8 13M18 2l-8 13" stroke="#858585" stroke-width="2"/><circle cx="8" cy="18" r="3" fill="none" stroke="#777" stroke-width="1.500"/><circle cx="16" cy="18" r="3" fill="none" stroke="#777" stroke-width="1.500"/>',
  copy: '<path fill="#6d6d6d" stroke="#888" d="M3.500 3.500h11v13h-11zM9.500 8.500h11v13h-11z"/><path d="M12 12h6M12 15h6M12 18h6" stroke="#999"/>',
  paste: '<path fill="#c6853b" d="M2 3h17v19H2z"/><path fill="#ddd" d="M6 1h9v5H6z"/><path fill="#f4f4f4" stroke="#999" d="M9.500 7.500h12v13h-12z"/><path d="M12 11h7M12 14h7M12 17h5" stroke="#999"/>',
  brush: '<path d="M17 1l-2 10" stroke="#b9732b" stroke-width="3"/><path fill="#e0b25c" d="M9 10l10 2-2 5-9-2z"/><path fill="#d31717" d="M8 15l10 2-1 6H1q6-2 7-8z"/>',
  undo: '<path d="M5 9h9q6 0 6 6 0 5-6 7" fill="none" stroke="#f0cf3c" stroke-width="4"/><path fill="#f0cf3c" d="M1 9l9-8v16z"/>',
  redo: '<path d="M19 9h-9q-6 0-6 6 0 5 2 7" fill="none" stroke="#777" stroke-width="4"/><path fill="#777" d="M23 9l-9-8v16z"/>',
  find: '<circle cx="11" cy="10" r="7.500" fill="#8fb2e6" stroke="#24365f" stroke-width="2"/><path d="M16 15l6 7" stroke="#24365f" stroke-width="3.500"/><path d="M20 2L8 19" stroke="#f59a35" stroke-width="3.500"/><path fill="#f6dcc0" d="M9 22l-3 1 0-4 3 1z"/>',
  abc: '<text x="12" y="9" font-family="Roboto" font-size="11" fill="#222" text-anchor="middle">Abc</text><path d="M9 16l4 5 8-10" fill="none" stroke="#6bd32b" stroke-width="2.500"/>',
  pilcrow: '<path fill="#3f79b7" d="M10 2h9v2h-2v18h-2V4h-2v18h-2V12a5 5 0 0 1-1-10z"/>',
  table: grid(''),
  image: '<path fill="#e9e2d2" stroke="#6d5a3a" d="M1.500 2.500h21v18h-21z"/><path fill="#f2a33a" d="M4 5h16v13H4z"/><path d="M12 18v-7l-4-4M12 12l5-5" stroke="#3b2713" stroke-width="1.800" fill="none"/>',
  chart: '<circle cx="12" cy="12" r="10" fill="#d8232a"/><path fill="#3b7cc4" d="M12 12V2a10 10 0 0 1 10 10z" transform="rotate(60 12 12)"/><path fill="#69a832" d="M12 12l8.600 5a10 10 0 0 1-8.600 5z"/>',
  textbox: '<path fill="#fff" stroke="#000" stroke-dasharray="2 1" d="M1.500 1.500h21v21h-21z"/><text x="12" y="19" font-family="Liberation Serif" font-weight="700" font-size="20" fill="#333" text-anchor="middle">T</text>',
  break: '<path fill="#ddd" d="M6 1h16v7H6zM6 16h16v7H6z"/><path d="M2 12h20" stroke="#3b82d0" stroke-width="2" stroke-dasharray="3 2"/><path fill="#3b82d0" d="M0 8l5 4-5 4z"/>',
  field: page('<text x="12" y="18" font-family="Roboto" font-weight="700" font-size="14" fill="#2a5ea8" text-anchor="middle">#</text>'),
  omega: '<text x="12" y="21" font-family="Liberation Serif" font-size="27" fill="#333" stroke="#999" stroke-width=".4" text-anchor="middle">Ω</text>',
  link: '<path d="M2 8q6 0 8 4M2 16q6 0 8-4M22 8q-6 0-8 4M22 16q-6 0-8-4M8 12h8" fill="none" stroke="#ddd" stroke-width="2.500"/>',
  footnote: page('<path d="M7 6h7M7 9h8M7 12h8" stroke="#999"/><path d="M7 18h9" stroke="#1c4587" stroke-width="3"/><path d="M19 13v8" stroke="#d22" stroke-width="2"/>'),
  endnote: page('<path fill="#777" d="M6 6h8v12H6z"/><path d="M16 8h4v12h-6" stroke="#2a5ea8" stroke-width="2" fill="none"/>'),
  bookmark: '<path fill="#e37c1c" d="M5 1h10v21l-5-5-5 5z"/><path fill="#ffe14a" d="M15 2l2 4 5 .5-4 3 1 4.500-4-2.500-4 2.500 1-4.500-4-3 5-.5z"/>',
  xref: page('<path d="M8 6h8M8 9h8M8 12h8" stroke="#4272b5" stroke-width="1.500"/><path d="M12 12v5M9 16l3 4 3-4" stroke="#1c4587" stroke-width="2" fill="none"/>'),
  note: '<path fill="#fbe94d" stroke="#c9a200" d="M3.500 3.500h18v12l-6 6h-12z"/><path fill="#d9b800" d="M21 15l-6 6v-6z"/>',
  track: page('<path d="M7 6h8M7 10h8M7 14h5M7 18h5" stroke="#d33" stroke-width="1.500"/><path d="M21 7L11 22" stroke="#ef8f2f" stroke-width="3"/>'),
  line: '<path d="M3 21L21 2" stroke="#111" stroke-width="1.200"/>',
  diamond: '<path fill="#6f9fe0" stroke="#2c4f86" d="M12 1l10 11-10 11L2 12z"/>',
  shapes: '<rect x="1.500" y="1.500" width="21" height="21" rx="2" fill="#7fa9dc" stroke="#4b78b3"/><path fill="#1f3b66" d="M5 5h5v5H5zM13 13l6 6h-6z"/><circle cx="16" cy="7.500" r="3" fill="#1f3b66"/><circle cx="7.500" cy="16" r="3" fill="#1f3b66"/>',
  styleup: '<circle cx="11" cy="13" r="9.500" fill="#e8e8e8"/><path fill="#aaa" d="M6 10l6-5v12l-3 4z"/><path d="M15 6q4-4 7 1M22 9q-4 4-7-1" stroke="#2f6fc0" stroke-width="2.500" fill="none"/>',
  stylenew: '<circle cx="11" cy="13" r="9.500" fill="#e8e8e8"/><path fill="#aaa" d="M6 10l6-5v12l-3 4z"/><path fill="#ffe14a" d="M17 0l2 4 5 .5-4 3 1 4.500-4-2.500-4 2.500 1-4.500-4-3 5-.5z"/>',
  bold: letter('a', '', 'font-weight="700"'),
  italic: letter('a', '', 'font-style="italic"'),
  underline: letter('a', '<path d="M4 21.500h16" stroke="#909090" stroke-width="1.500"/>'),
  strike: letter('a', '<path d="M2 13h20" stroke="#aaa" stroke-width="1.500"/>', 'font-weight="700"'),
  super: '<text x="0" y="20" font-family="Liberation Serif" font-size="22" fill="#444" stroke="#909090" stroke-width=".6">a</text><text x="13" y="13" font-family="Liberation Serif" font-size="18" fill="#4a8ad4">b</text>',
  sub: '<text x="0" y="16" font-family="Liberation Serif" font-size="22" fill="#444" stroke="#909090" stroke-width=".6">a</text><text x="13" y="23" font-family="Liberation Serif" font-size="18" fill="#4a8ad4">b</text>',
  clear: letter('a', '<path d="M14 14l8 8M22 14l-8 8" stroke="#e22" stroke-width="3"/>', 'font-style="italic"'),
  color: '<text x="12" y="13" font-family="Liberation Serif" font-weight="700" font-size="21" fill="#4a8ad4" text-anchor="middle">a</text><path fill="#c8141c" d="M0 17h24v6H0z"/>',
  highlight: '<path d="M20 0l-9 10" stroke="#555" stroke-width="6"/><path fill="#f5d21c" d="M9 6l7 6-9 4-2-2z"/><path fill="#fff200" d="M0 17h24v6H0z"/>',
  bullets: lines('M8 4h14M8 12h14M8 20h14', '#8f938c') + '<path fill="#4a7ab4" d="M1 2h4v4H1zM1 10h4v4H1zM1 18h4v4H1z"/>',
  numbers: lines('M8 4h14M8 12h14M8 20h14', '#8f938c') + '<g font-family="Roboto" font-size="10" fill="#4a7ab4"><text x="0" y="8">1</text><text x="0" y="22">2</text></g>',
  aleft: lines('M2 3h18M2 9h12M2 15h18M2 21h10', '#e8e8e8'),
  acenter: lines('M5 3h14M2 9h20M5 15h14M7 21h10'), aright: lines('M8 3h14M2 9h20M8 15h14M12 21h10'), ajust: lines('M2 3h20M2 9h20M2 15h20M2 21h20'),
  spacing: lines('M10 4h13M10 12h13M10 20h13') + '<path d="M4 3v18M1 6l3-4 3 4M1 18l3 4 3-4" stroke="#ef8b3a" stroke-width="2" fill="none"/>',
  pinc: lines('M4 3h18M10 9h12M10 15h12M4 21h10') + '<path fill="#ef8b3a" d="M1 12l3-5 3 5zM1 14h6l-3 5z"/>',
  pdec: '<g opacity=".4">' + lines('M4 3h18M10 9h12M10 15h6M4 21h10') + '</g>',
  indent: '<g opacity=".4">' + lines('M2 3h20M10 9h12M10 15h12M2 21h20') + '<path d="M2 8l4 4-4 4" stroke="#aaa" stroke-width="2" fill="none"/></g>',
  dedent: lines('M4 3h18M10 9h12M10 15h12M4 21h18') + '<path d="M7 7l-5 5 5 5" stroke="#ef8b3a" stroke-width="2.500" fill="none"/>',
  rowup: grid('<path fill="#5fc21e" d="M3 9h18v6H3zM8 4h8l-4-4z"/>'), rowdown: grid('<path fill="#5fc21e" d="M3 9h18v6H3zM8 20h8l-4 4z"/>'),
  colleft: grid('<path fill="#5fc21e" d="M9 4h6v16H9zM5 8v8l-5-4z"/>'), colright: grid('<path fill="#5fc21e" d="M9 4h6v16H9zM19 8v8l5-4z"/>'),
  delrow: grid('<path fill="#d2141c" d="M3 9h18v6H3z"/>'), delcol: grid('<path fill="#d2141c" d="M9 4h6v16H9z"/>'), deltab: grid('<path fill="#d2141c" d="M12 16h11v6H12z"/>'),
  selcell: grid('<path fill="#3d78c0" d="M8 8h9v8H8z"/>'), seltab: grid('<path fill="#3d78c0" d="M3 4h18v16H3z"/>'),
  merge: '<g opacity=".3">' + grid('') + '</g>',
  split: grid('<path fill="#444" d="M11 1h2v22h-2z"/><path fill="#3d78c0" d="M5 9l-4 3 4 3zM19 9l4 3-4 3z"/>'), splitv: grid('<path fill="#444" d="M1 11h22v2H1z"/><path fill="#3d78c0" d="M9 7l3-4 3 4zM9 17l3 4 3-4z"/>'),
  optimize: '<g opacity=".8">' + grid('') + '</g><path d="M9 16l4 5 9-9" stroke="#5fc21e" stroke-width="2.500" fill="none"/><path fill="#fff" d="M7 0h10v4H7z"/>',
  vtop: '<path fill="#f7f7f7" d="M3 1h18v22H3z"/><path d="M5 6h7M5 10h7" stroke="#222" stroke-width="2"/><path d="M17 4v9M14 7l3-3 3 3" stroke="#3d78c0" stroke-width="1.500" fill="none"/>',
  vcenter: '<path fill="#f7f7f7" d="M3 1h18v22H3z"/><path d="M5 11h7M5 15h7" stroke="#222" stroke-width="2"/><path d="M17 5v14" stroke="#3d78c0" stroke-width="1.500"/>',
  vbottom: '<path fill="#f7f7f7" d="M3 1h18v22H3z"/><path d="M5 16h7M5 20h7" stroke="#222" stroke-width="2"/><path d="M17 11v9" stroke="#3d78c0" stroke-width="1.500"/>',
  tcolor: '<path fill="#f7f7f7" d="M3 0h18v16H3z"/><path fill="#3d78c0" d="M3 0h18v3H3z"/><path d="M6 7h12M6 11h12" stroke="#222" stroke-width="2"/><path fill="#fff200" d="M0 18h24v6H0z"/>',
  autof: page('<path fill="#3d78c0" d="M4 1h16v4H4z"/><path fill="#ffe98a" d="M9 8h8v6H9z"/><path d="M14 13l7 9" stroke="#b48a2a" stroke-width="2.500"/>'),
  borders: '<path fill="#f7f7f7" d="M3 2h18v20H3z"/><path d="M3 12h18M12 2v20" stroke="#3d78c0" stroke-dasharray="2 1"/>',
  bstyle: '<path d="M2 22V2h20" stroke="#3d78c0" stroke-width="1.500" stroke-dasharray="3 2" fill="none"/><path d="M8 22V9h12M14 22v-8" stroke="#222" stroke-width="2" stroke-dasharray="3 2" fill="none"/>',
  bcolor: '<path fill="#444" stroke="#222" stroke-width="2" d="M4 1h16v13H4z"/><path fill="#00007d" d="M0 18h24v6H0z"/>',
  currency: '<path fill="#7cbf57" d="M2 3h20v13H2z"/><circle cx="12" cy="9" r="4" fill="#d6efc4"/><circle cx="17" cy="18" r="4.500" fill="#d9c34a"/>',
  percent: '<text x="12" y="19" font-family="Roboto" font-size="20" fill="#444" stroke="#777" stroke-width=".5" text-anchor="middle">%</text>',
  decimal: '<text x="12" y="19" font-family="Roboto" font-size="17" fill="#222" text-anchor="middle">0.0</text>',
  numfmt: page('<path fill="#3d78c0" d="M4 1h16v4H4z"/><text x="12" y="17" font-family="Roboto" font-size="10" font-weight="700" fill="#222" text-anchor="middle">##</text>'),
  caption: '<rect x="3" y="1" width="18" height="14" rx="3" fill="#f4f4f4"/><text x="12" y="24" font-family="Roboto" font-size="9" fill="#111" text-anchor="middle">ABC</text>',
  sort: '<g opacity=".5"><path d="M15 3v16M10 14l5 6 5-6" stroke="#aaa" stroke-width="2.500" fill="none"/><path d="M5 2v20" stroke="#999" stroke-dasharray="2 2"/></g>',
  protect: grid('') + '<path fill="#f1cf2d" d="M11 14h11v9H11z"/><path d="M13 14v-3q3.500-3 7 0v3" stroke="#ccc" stroke-width="2" fill="none"/>',
  unprotect: '<g opacity=".3">' + grid('') + '</g>',
  sum: '<text x="12" y="21" font-family="Liberation Serif" font-size="25" fill="#333" stroke="#888" stroke-width=".5" text-anchor="middle">Σ</text>',
  fx: '<text x="12" y="21" font-family="Liberation Serif" font-style="italic" font-size="20" fill="#b978c8" text-anchor="middle">fx</text><path d="M4 4h3M12 2h3M19 4h3" stroke="#ffe14a" stroke-width="3"/>',
  props: '<g opacity=".7">' + grid('') + '</g><path d="M12 12l10 11" stroke="#ddd" stroke-width="3.500"/>',
  up: '<path d="M12 10v12" stroke="#f0f0f0" stroke-width="4" stroke-dasharray="5 2"/><path d="M5 10l7-7 7 7" stroke="#f0f0f0" stroke-width="3" fill="none"/>',
  down: '<path d="M12 2v12" stroke="#f0f0f0" stroke-width="4" stroke-dasharray="5 2"/><path d="M5 13l7 7 7-7" stroke="#f0f0f0" stroke-width="3" fill="none"/>',
  wrench: '<path d="M6 6l12 12" stroke="#e8e8e8" stroke-width="4"/><path d="M5 1l1 4-3 2-2-2q0 5 5 6l5-5q-1-4-6-5zM19 23l-1-4 3-2 2 2q0-5-5-6l-5 5q1 4 6 5z" fill="#e8e8e8"/>',
  doc: '<path fill="#f6f6f6" d="M4 1h12l4 4v18H4z"/><path fill="#bbb" d="M16 1l4 4h-4z"/>',
  styles: '<path fill="#262626" d="M6 2h16v3h-6v15h-4V5H6z"/><path fill="#5fb12c" stroke="#2f6a10" d="M1 6v17h20z"/><path fill="#404143" d="M5 14v5h7z"/>',
  gallery: '<path fill="#c9811f" d="M1 5h22v16H1z"/><path fill="#f3c467" d="M4 8h16v10H4z"/><path fill="#8fa9bd" d="M5 9h14v5H5z"/><path d="M12 18v-7M9 9l3 4 3-4" stroke="#2c1c0c" stroke-width="1.500" fill="none"/>',
  compass: '<circle cx="12" cy="12" r="10" fill="#f2f2f2" stroke="#b8b8b8" stroke-width="2"/><path fill="#d22" d="M6 5l8 6-3 2z"/><path fill="#3b6fb5" d="M18 19l-8-6 4-2z"/>'
};
const glyph = n => `<svg class="size-6" viewBox="0 0 24 24">${I[n]}</svg>`;
document.querySelectorAll('[data-bar]').forEach(el => {
  el.innerHTML = el.dataset.bar.split(' ').map(n =>
    n === '^' ? '<button aria-label="More" class="flex w-[11px] justify-center"><svg class="h-1.5 w-2" viewBox="0 0 8 6"><path fill="#111" d="M1 0h6L4 5z"/></svg></button>' :
    n === '|' ? '<i class="w-2"></i>' :
    n[0] === '*' ? `<button aria-label="${n.slice(1)}" class="flex h-[34px] w-[33px] items-center justify-center rounded border border-[#16306e] bg-[#2a62d9]">${glyph(n.slice(1))}</button>` :
    `<button aria-label="${n}" class="flex w-[33px] justify-center">${glyph(n)}</button>`).join('');
});
document.querySelectorAll('[data-side]').forEach(el => {
  el.innerHTML = el.dataset.side.split(' ').map(n => n[0] === '*'
    ? `<button aria-label="${n.slice(1)}" class="flex size-8 items-center justify-center rounded border border-[#ccc]">${glyph(n.slice(1))}</button>`
    : `<button aria-label="${n}" class="flex size-8 items-center justify-center">${glyph(n)}</button>`).join('');
});
</script>
</body>
</html>
